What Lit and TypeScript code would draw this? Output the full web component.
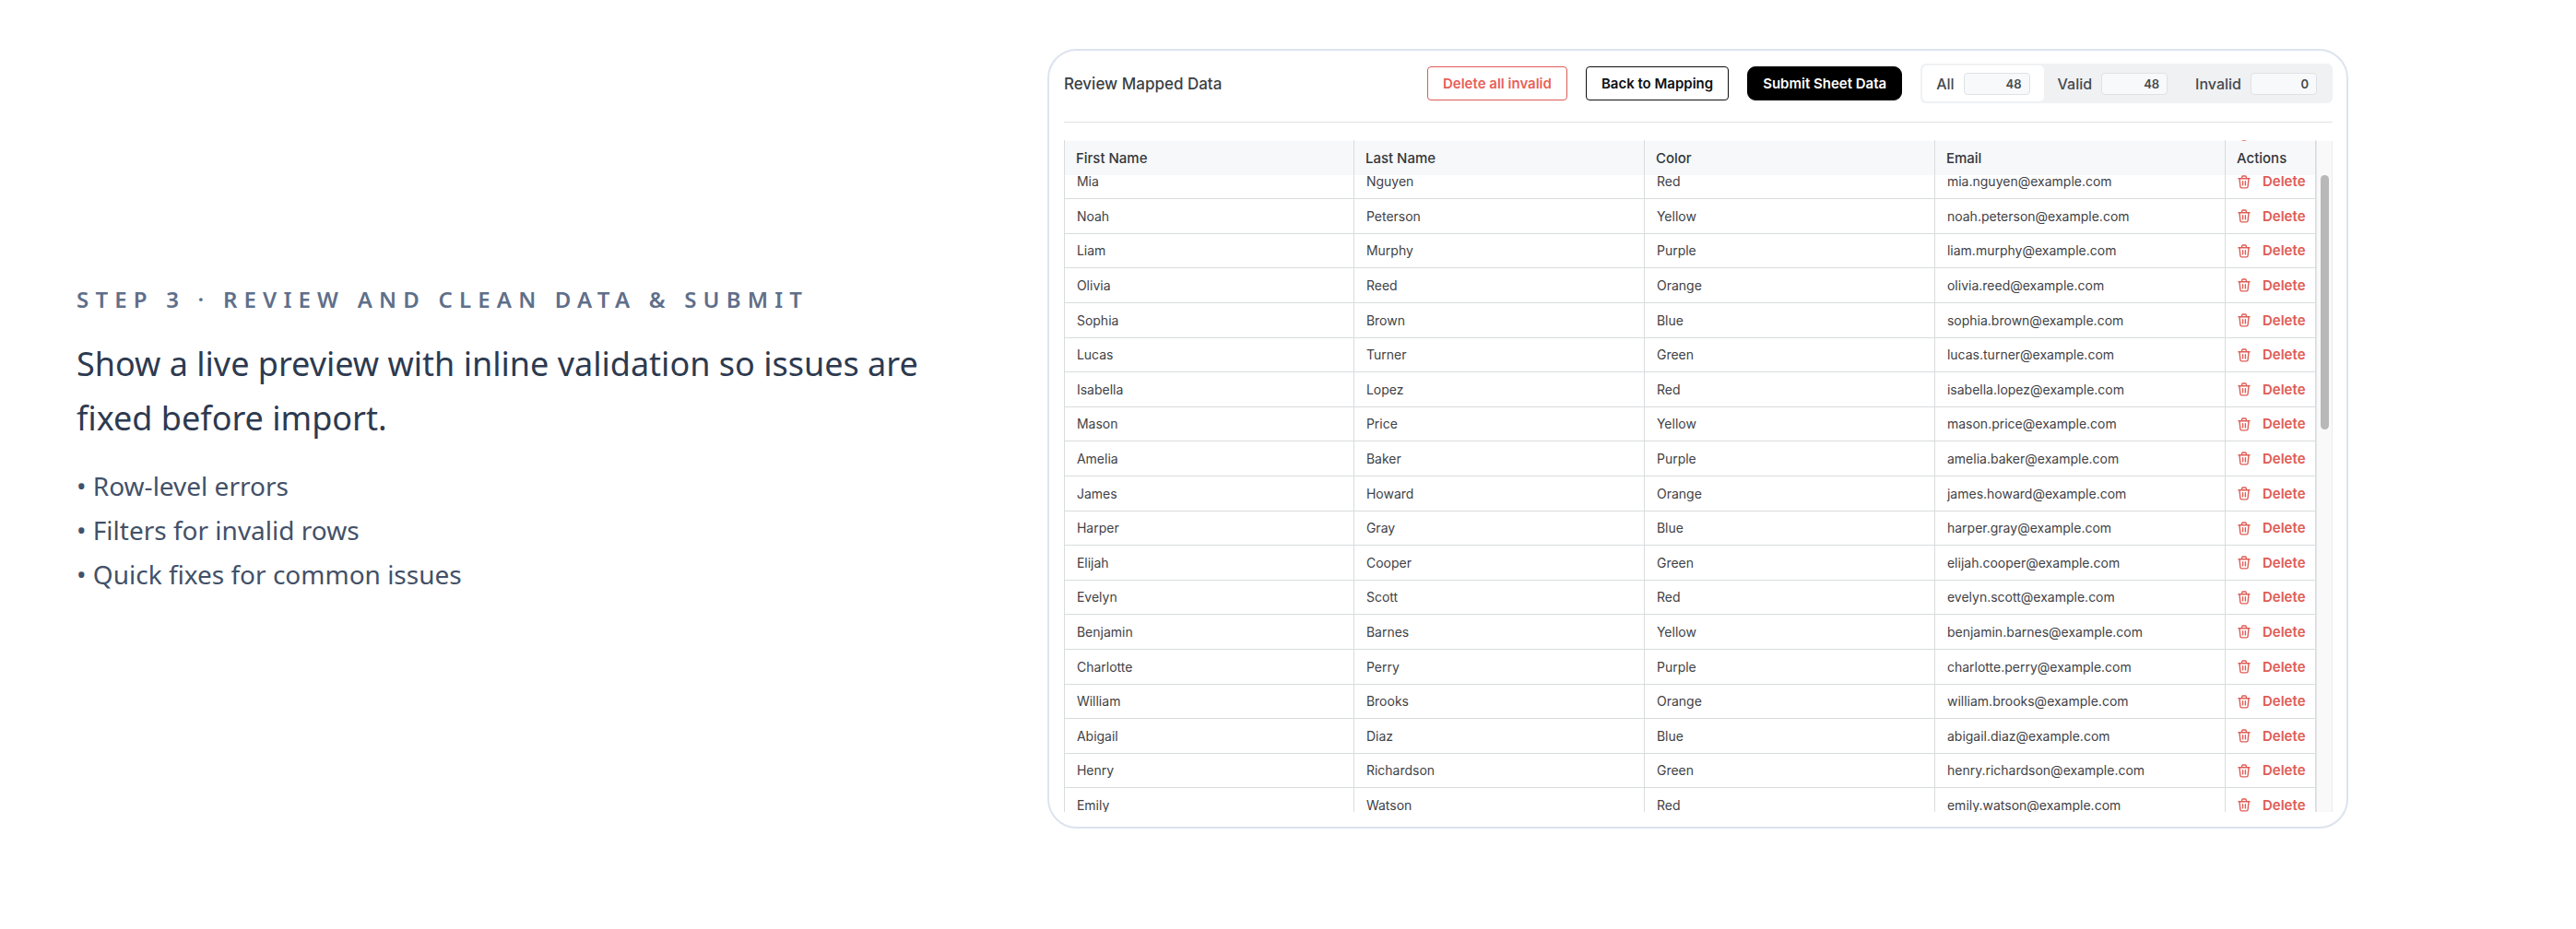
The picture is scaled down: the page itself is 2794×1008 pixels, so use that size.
import { LitElement, html, css } from "lit";
import { customElement, state } from "lit/decorators.js";

interface Person {
  first: string;
  last: string;
  color: string;
  email: string;
}

const person = (first: string, last: string, color: string): Person => ({
  first,
  last,
  color,
  email: `${first}.${last}@example.com`.toLowerCase(),
});

const PEOPLE: Person[] = [
  person("Mia", "Nguyen", "Red"),
  person("Noah", "Peterson", "Yellow"),
  person("Liam", "Murphy", "Purple"),
  person("Olivia", "Reed", "Orange"),
  person("Sophia", "Brown", "Blue"),
  person("Lucas", "Turner", "Green"),
  person("Isabella", "Lopez", "Red"),
  person("Mason", "Price", "Yellow"),
  person("Amelia", "Baker", "Purple"),
  person("James", "Howard", "Orange"),
  person("Harper", "Gray", "Blue"),
  person("Elijah", "Cooper", "Green"),
  person("Evelyn", "Scott", "Red"),
  person("Benjamin", "Barnes", "Yellow"),
  person("Charlotte", "Perry", "Purple"),
  person("William", "Brooks", "Orange"),
  person("Abigail", "Diaz", "Blue"),
  person("Henry", "Richardson", "Green"),
  person("Emily", "Watson", "Red"),
];

const FILTERS = [
  { id: "all", label: "All", count: 48 },
  { id: "valid", label: "Valid", count: 48 },
  { id: "invalid", label: "Invalid", count: 0 },
];

const trashIcon = html`<svg class="trash" viewBox="0 0 14 15" aria-hidden="true">
  <path
    d="M1 3.8h12M4.3 3.8l.5-2c.1-.5.4-.8.9-.8h2.6c.5 0 .8.3.9.8l.5 2M2 3.8l.9 8.700c.1.9.6 1.4 1.4 1.4h5.400c.8 0 1.3-.5 1.4-1.4L12 3.8M5.6 6.7v4.200M8.4 6.7v4.200"
  />
</svg>`;

@customElement("step-copy")
class StepCopy extends LitElement {
  static styles = css`
    :host {
      display: block;
      padding-top: 4px;
      font-family: "Noto Sans", sans-serif;
    }
    .eyebrow {
      margin: 0;
      font-size: 24px;
      line-height: 32px;
      font-weight: 600;
      letter-spacing: 0.3em;
      text-transform: uppercase;
      color: #5f6f8a;
    }
    .headline {
      margin: 24px 0 0;
      max-width: 960px;
      font-size: 36px;
      line-height: 59px;
      font-weight: 400;
      color: #2d3a50;
    }
    .points {
      margin: 20px 0 0;
      padding: 0;
      list-style: none;
      font-size: 28px;
      line-height: 48px;
      color: #435168;
    }
  `;
  render() {
    return html`
      <p class="eyebrow">Step 3 · Review and clean data &amp; submit</p>
      <h2 class="headline">
        Show a live preview with inline validation so issues are fixed before import.
      </h2>
      <ul class="points">
        <li>• Row-level errors</li>
        <li>• Filters for invalid rows</li>
        <li>• Quick fixes for common issues</li>
      </ul>
    `;
  }
}

@customElement("review-toolbar")
class ReviewToolbar extends LitElement {
  @state() private active = "all";

  static styles = css`
    :host {
      display: flex;
      align-items: center;
      gap: 20px;
      padding-bottom: 20px;
      border-bottom: 1px solid #dfe1e4;
    }
    .title {
      flex: 1;
      margin: 0;
      font-size: 17px;
      line-height: 24px;
      font-weight: 500;
      color: #3b3f44;
    }
    button {
      font-family: inherit;
      cursor: pointer;
    }
    .action {
      height: 37px;
      padding: 0 16px;
      border: 1px solid #0d0f12;
      border-radius: 4px;
      background: #ffffff;
      color: #0d0f12;
      font-size: 15px;
      line-height: 20px;
      font-weight: 600;
    }
    .danger {
      border-color: #df5b55;
      color: #e85f58;
    }
    .primary {
      border-color: #000000;
      border-radius: 9px;
      background: #000000;
      color: #ffffff;
    }
    .filters {
      display: flex;
      padding: 2px;
      border-radius: 6px;
      background: #eff1f3;
    }
    .filter {
      display: flex;
      align-items: center;
      gap: 10px;
      height: 39px;
      padding: 0 15px;
      border: 0;
      border-radius: 5px;
      background: transparent;
      color: #45494e;
      font-size: 16px;
      line-height: 20px;
      font-weight: 500;
    }
    .filter.active {
      background: #ffffff;
    }
    .count {
      box-sizing: border-box;
      width: 72px;
      padding: 0 8px;
      border: 1px solid #dfe2e5;
      border-radius: 4px;
      background: #f8f9fa;
      font-size: 13px;
      line-height: 22px;
      font-weight: 600;
      text-align: right;
    }
  `;
  render() {
    return html`
      <h3 class="title">Review Mapped Data</h3>
      <button class="action danger" type="button">Delete all invalid</button>
      <button class="action" type="button">Back to Mapping</button>
      <button class="action primary" type="button">Submit Sheet Data</button>
      <div class="filters">
        ${FILTERS.map(
          (f) => html`<button
            type="button"
            class="filter ${f.id === this.active ? "active" : ""}"
            aria-pressed=${f.id === this.active}
            @click=${() => (this.active = f.id)}
          >
            <span>${f.label}</span><span class="count">${f.count}</span>
          </button>`
        )}
      </div>
    `;
  }
}

@customElement("data-sheet")
class DataSheet extends LitElement {
  static styles = css`
    :host {
      display: flex;
      height: 729px;
    }
    .viewport {
      flex: 1;
      min-width: 0;
      overflow: hidden;
    }
    table {
      width: 100%;
      table-layout: fixed;
      border-collapse: separate;
      border-spacing: 0;
      font-size: 14px;
      line-height: 20px;
      color: #3f4246;
    }
    .actions {
      width: 98px;
    }
    th,
    td {
      box-sizing: border-box;
      padding: 0 0 0 13px;
      border-right: 1px solid #d8dcdd;
      text-align: left;
      white-space: nowrap;
    }
    th:first-child,
    td:first-child {
      border-left: 1px solid #d8dcdd;
    }
    th {
      position: sticky;
      top: 1px;
      height: 37px;
      padding-left: 12px;
      background: #f7f8fa;
      font-size: 15px;
      font-weight: 500;
      color: #33373b;
    }
    td {
      height: 38px;
      border-bottom: 1px solid #d8dcdd;
    }
    tr:nth-child(5n + 2) td,
    tr:nth-child(5n + 4) td {
      height: 37px;
    }
    .delete {
      display: flex;
      align-items: center;
      gap: 13px;
      padding: 0;
      border: 0;
      background: none;
      color: #e05c55;
      font-family: inherit;
      font-size: 15px;
      line-height: 20px;
      font-weight: 600;
      cursor: pointer;
    }
    .trash {
      display: block;
      width: 14px;
      height: 15px;
      fill: none;
      stroke: #e05c55;
      stroke-width: 1.4;
      stroke-linecap: round;
      stroke-linejoin: round;
    }
    .track {
      box-sizing: border-box;
      width: 18px;
      margin-top: 1px;
      padding: 37px 3px 0 4px;
      border-left: 1px solid #e4e5e6;
      border-right: 1px solid #ebebeb;
      background: #f9f9f9;
    }
    .thumb {
      height: 40%;
      border-radius: 5px;
      background: #b8b8b8;
    }
  `;
  firstUpdated() {
    this.renderRoot.querySelector(".viewport")!.scrollTop = 48;
  }
  render() {
    return html`
      <div class="viewport">
        <table>
          <thead>
            <tr>
              <th>First Name</th>
              <th>Last Name</th>
              <th>Color</th>
              <th>Email</th>
              <th class="actions">Actions</th>
            </tr>
          </thead>
          <tbody>
            <tr>
              <td></td>
              <td></td>
              <td></td>
              <td></td>
              <td>${trashIcon}</td>
            </tr>
            ${PEOPLE.map(
              (p) => html`<tr>
                <td>${p.first}</td>
                <td>${p.last}</td>
                <td>${p.color}</td>
                <td>${p.email}</td>
                <td><button class="delete" type="button">${trashIcon}Delete</button></td>
              </tr>`
            )}
          </tbody>
        </table>
      </div>
      <div class="track"><div class="thumb"></div></div>
    `;
  }
}

@customElement("app-root")
class AppRoot extends LitElement {
  static styles = css`
    :host {
      display: block;
      min-height: 100vh;
      background: #ffffff;
    }
    .step {
      display: grid;
      grid-template-columns: 5fr 7fr;
      column-gap: 45px;
      align-items: center;
      padding: 53px 247px 0 83px;
    }
    .card {
      min-width: 0;
      padding: 14px 15px 16px 16px;
      border: 2px solid #dde3ef;
      border-radius: 32px;
      background: #ffffff;
      font-family: Inter, sans-serif;
    }
    .sheet {
      margin-top: 19px;
    }
  `;
  render() {
    return html`
      <section class="step">
        <step-copy></step-copy>
        <div class="card">
          <review-toolbar></review-toolbar>
          <data-sheet class="sheet"></data-sheet>
        </div>
      </section>
    `;
  }
}
